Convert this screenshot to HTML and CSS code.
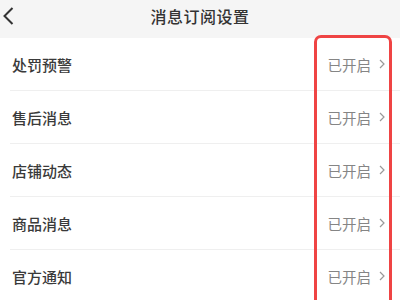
FILE: index.html
```html
<!DOCTYPE html>
<html lang="zh">
<head>
<meta charset="utf-8">
<link rel="stylesheet" href="styles.css">
</head>
<body>
<div class="page">
  <header class="nav">
    <svg class="back" width="12" height="18" viewBox="0 0 12 18"><path d="M10.5 1 L2.5 9 L10.5 17" fill="none" stroke="#333" stroke-width="2"/></svg>
    <div class="title">消息订阅设置</div>
  </header>
  <ul class="list">
    <li class="row"><span class="label">处罚预警</span><span class="state">已开启<svg class="arrow" width="6" height="10" viewBox="0 0 6 10"><path d="M1 1 L5 5 L1 9" fill="none" stroke="#999" stroke-width="1.2"/></svg></span></li>
    <li class="row"><span class="label">售后消息</span><span class="state">已开启<svg class="arrow" width="6" height="10" viewBox="0 0 6 10"><path d="M1 1 L5 5 L1 9" fill="none" stroke="#999" stroke-width="1.2"/></svg></span></li>
    <li class="row"><span class="label">店铺动态</span><span class="state">已开启<svg class="arrow" width="6" height="10" viewBox="0 0 6 10"><path d="M1 1 L5 5 L1 9" fill="none" stroke="#999" stroke-width="1.2"/></svg></span></li>
    <li class="row"><span class="label">商品消息</span><span class="state">已开启<svg class="arrow" width="6" height="10" viewBox="0 0 6 10"><path d="M1 1 L5 5 L1 9" fill="none" stroke="#999" stroke-width="1.2"/></svg></span></li>
    <li class="row"><span class="label">官方通知</span><span class="state">已开启<svg class="arrow" width="6" height="10" viewBox="0 0 6 10"><path d="M1 1 L5 5 L1 9" fill="none" stroke="#999" stroke-width="1.2"/></svg></span></li>
  </ul>
  <div class="highlight"></div>
</div>
</body>
</html>
```
FILE: styles.css
```css
html, body { margin: 0; padding: 0; }
body {
  width: 400px; height: 300px; overflow: hidden;
  background: #fff;
  font-family: "Noto Sans CJK SC", "Noto Sans", sans-serif;
}
.page { position: relative; width: 400px; height: 300px; overflow: hidden; }
.nav {
  height: 38px;
  background: #f5f5f5;
  display: flex; align-items: center; justify-content: center;
  position: relative;
}
.back { position: absolute; left: 2px; top: 7px; }
.title { font-size: 16px; font-weight: 500; color: #333; letter-spacing: 0.5px; margin-top: -6px; }
.list { list-style: none; margin: 0; padding: 0 0 0 10px; }
.row {
  height: 53px;
  display: flex; align-items: center; justify-content: space-between;
  border-bottom: 1px solid #efefef;
  box-sizing: border-box;
  padding-right: 15px;
}
.label { font-size: 15px; font-weight: 500; color: #3a3a3a; padding-left: 2px; }
.state { font-size: 14.5px; color: #858585; display: flex; align-items: center; }
.arrow { margin-left: 8px; }
.highlight {
  position: absolute;
  left: 314px; top: 35px; width: 78px; height: 280px;
  border: 3px solid #ef4444;
  border-radius: 7px;
  box-sizing: border-box;
}
```
